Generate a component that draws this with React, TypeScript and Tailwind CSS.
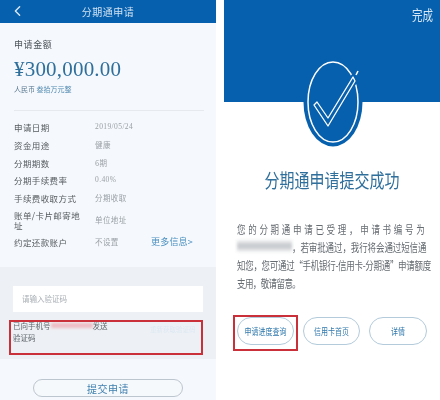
import React from 'react';
import { ChevronLeft } from 'lucide-react';

const CJK = { fontFamily: '"Noto Sans CJK SC", sans-serif' };

const rows: { label: string; value: string; serif?: boolean; h: string }[] = [
  { label: '申请日期', value: '2019/05/24', serif: true, h: 'h-[18px]' },
  { label: '资金用途', value: '健康', h: 'h-[18px]' },
  { label: '分期期数', value: '6期', h: 'h-[17px]' },
  { label: '分期手续费率', value: '0.40%', serif: true, h: 'h-[18px]' },
  { label: '手续费收取方式', value: '分期收取', h: 'h-[18px]' },
  { label: '账单/卡片邮寄地址', value: '单位地址', h: 'h-[26px]' },
];

function LeftPhone() {
  return (
    <div className="relative w-[216px] h-[400px] bg-[#f5f8fc] overflow-hidden flex flex-col blur-[0.4px]">
      <div className="h-[23px] bg-[#0760ad] flex items-center justify-center relative shrink-0">
        <ChevronLeft className="absolute left-[9px] top-[0px] w-[17px] h-[22px] text-[#d8e8f5]" strokeWidth={2} />
        <span className="text-[10px] tracking-[0.5px] text-[#cfe2f2]">分期通申请</span>
      </div>

      <div className="px-[14px] pt-[15px]">
        <div className="text-[9px] leading-[14px] tracking-[0.6px] text-[#4a5258]">申请金额</div>
        <div className="mt-[4px] text-[21px] leading-[26px] tracking-[0.2px] text-[#2f6f9c]" style={{ fontFamily: '"Liberation Serif", serif' }}>
          ¥300,000.00
        </div>
        <div className="mt-[1px] text-[7px] leading-[12px] text-[#5b7a92]">
          人民币 <span className="text-[#4f88b0]">叁拾万元整</span>
        </div>
        <div className="mt-[15px] h-px bg-[#e6eaef] w-[190px]" />
      </div>

      <div className="px-[14px] pt-[7px] flex flex-col">
        {rows.map((r) => (
          <div key={r.label} className={`flex items-center ${r.h}`}>
            <div className="w-[68px] text-[8.5px] leading-[10px] tracking-[0.4px] text-[#555b60]">{r.label}</div>
            <div
              className="ml-[13px] text-[7.5px] tracking-[0.4px] text-[#9aa1a7]"
              style={r.serif ? { fontFamily: '"Liberation Serif", serif' } : undefined}
            >
              {r.value}
            </div>
          </div>
        ))}
        <div className="flex items-center h-[18px]">
          <div className="w-[68px] text-[8.5px] tracking-[0.4px] text-[#555b60]">约定还款账户</div>
          <div className="ml-[13px] text-[7.5px] tracking-[0.4px] text-[#9aa1a7]">不设置</div>
          <div className="ml-auto mr-[9px] text-[9px] tracking-[0.2px] text-[#4a8fc0]">更多信息&gt;</div>
        </div>
      </div>

      <div className="mt-[16px] h-[92px] bg-[#edf1f5] px-[13px] pt-[19px] shrink-0">
        <div className="h-[26px] w-[190px] bg-white flex items-center pl-[9px] text-[7.5px] text-[#a8aeb4]">请输入验证码</div>
        <div className="mt-[8px] flex">
          <div className="w-[110px] text-[7.5px] leading-[12px] text-[#5f666c]">
            <div className="flex whitespace-nowrap">
              已向手机号
              <span className="mt-[3px] h-[5px] w-[42px] bg-[#eeb9c2] blur-[1.5px]" />
              发送
            </div>
            <div>验证码</div>
          </div>
          <div className="ml-[27px] mt-[5px] text-[6.5px] whitespace-nowrap text-[#dde8f2]">重新获取验证码</div>
        </div>
      </div>

      <div className="mt-[20px] ml-[33px] w-[150px] h-[18px] rounded-full border border-[#bcc6ce] bg-[#f6f9fc] flex items-center justify-center text-[10px] tracking-[0.5px] text-[#3f7fae]">
        提交申请
      </div>

      <div className="absolute left-[9px] top-[320px] w-[194px] h-[35px] border-2 border-[#c9303a]" />
    </div>
  );
}

function RightPhone() {
  return (
    <div className="relative w-[216px] h-[400px] bg-white overflow-hidden flex flex-col blur-[0.4px]">
      <div className="h-[102px] bg-[#0760ad] shrink-0 flex justify-end pr-[7px] pt-[5px]">
        <span className="text-[10.5px] leading-[16px] text-[#d8e8f5] origin-top scale-y-[1.25]">完成</span>
      </div>

      <svg className="absolute left-[79px] top-[57px]" width="60" height="90" viewBox="0 0 60 90">
        <ellipse cx="30" cy="45" rx="29.5" ry="44.5" fill="#0760ad" />
        <ellipse cx="30" cy="45" rx="25" ry="40" fill="none" stroke="#fff" strokeWidth="1.5" />
        <path d="M11 48 L14 45 L25 61 L50 20 L52 24 L25 69 Z" fill="#0760ad" stroke="#0760ad" strokeWidth="5" strokeLinejoin="round" />
        <path d="M11 48 L14 45 L25 61 L50 20 L52 24 L25 69 Z" fill="#0760ad" stroke="#fff" strokeWidth="1.3" strokeLinejoin="round" />
        <path d="M53 18 L55 14" stroke="#fff" strokeWidth="1.5" />
      </svg>

      <div className="mt-[67px] text-center text-[15px] leading-[22px] text-[#2f6f9c] origin-center scale-y-[1.3]">
        分期通申请提交成功
      </div>

      <div className="mt-[28px] pl-[13px] text-[8.5px] leading-[18px] text-[#666c72] whitespace-nowrap">
        <div className="tracking-[2.7px] origin-left scale-y-[1.4]">您的分期通申请已受理，申请书编号为</div>
        <div className="flex origin-left scale-y-[1.4]">
          <span className="mt-[6px] h-[6px] w-[55px] bg-[#c9ccd0] blur-[1.5px]" />
          <span className="tracking-[-0.1px]">，若审批通过，我行将会通过短信通</span>
        </div>
        <div className="tracking-[-0.3px] origin-left scale-y-[1.4]">知您，您可通过“手机银行-信用卡-分期通”申请额度</div>
        <div className="tracking-[-0.6px] origin-left scale-y-[1.4]">支用，敬请留意。</div>
      </div>

      <div className="mt-[26px] pl-[13px] flex">
        <div className="w-[57px] h-[28px] rounded-[14px] border-[1.5px] border-[#b3cbdb] flex items-center justify-center text-[7px] text-[#2f78ad]">
          <span className="scale-y-[1.3]">申请进度查询</span>
        </div>
        <div className="ml-[9px] w-[57px] h-[28px] rounded-[14px] border-[1.5px] border-[#b3cbdb] flex items-center justify-center text-[7px] text-[#2f78ad]">
          <span className="scale-y-[1.3]">信用卡首页</span>
        </div>
        <div className="ml-[9px] w-[58px] h-[28px] rounded-[14px] border-[1.5px] border-[#b3cbdb] flex items-center justify-center text-[7px] text-[#2f78ad]">
          <span className="scale-y-[1.3]">详情</span>
        </div>
      </div>

      <div className="absolute left-[9px] top-[315px] w-[65px] h-[36px] border-2 border-[#c9303a]" />
    </div>
  );
}

export default function App() {
  return (
    <div className="w-[440px] h-[400px] bg-white flex overflow-hidden" style={CJK}>
      <LeftPhone />
      <div className="w-[8px]" />
      <RightPhone />
    </div>
  );
}
